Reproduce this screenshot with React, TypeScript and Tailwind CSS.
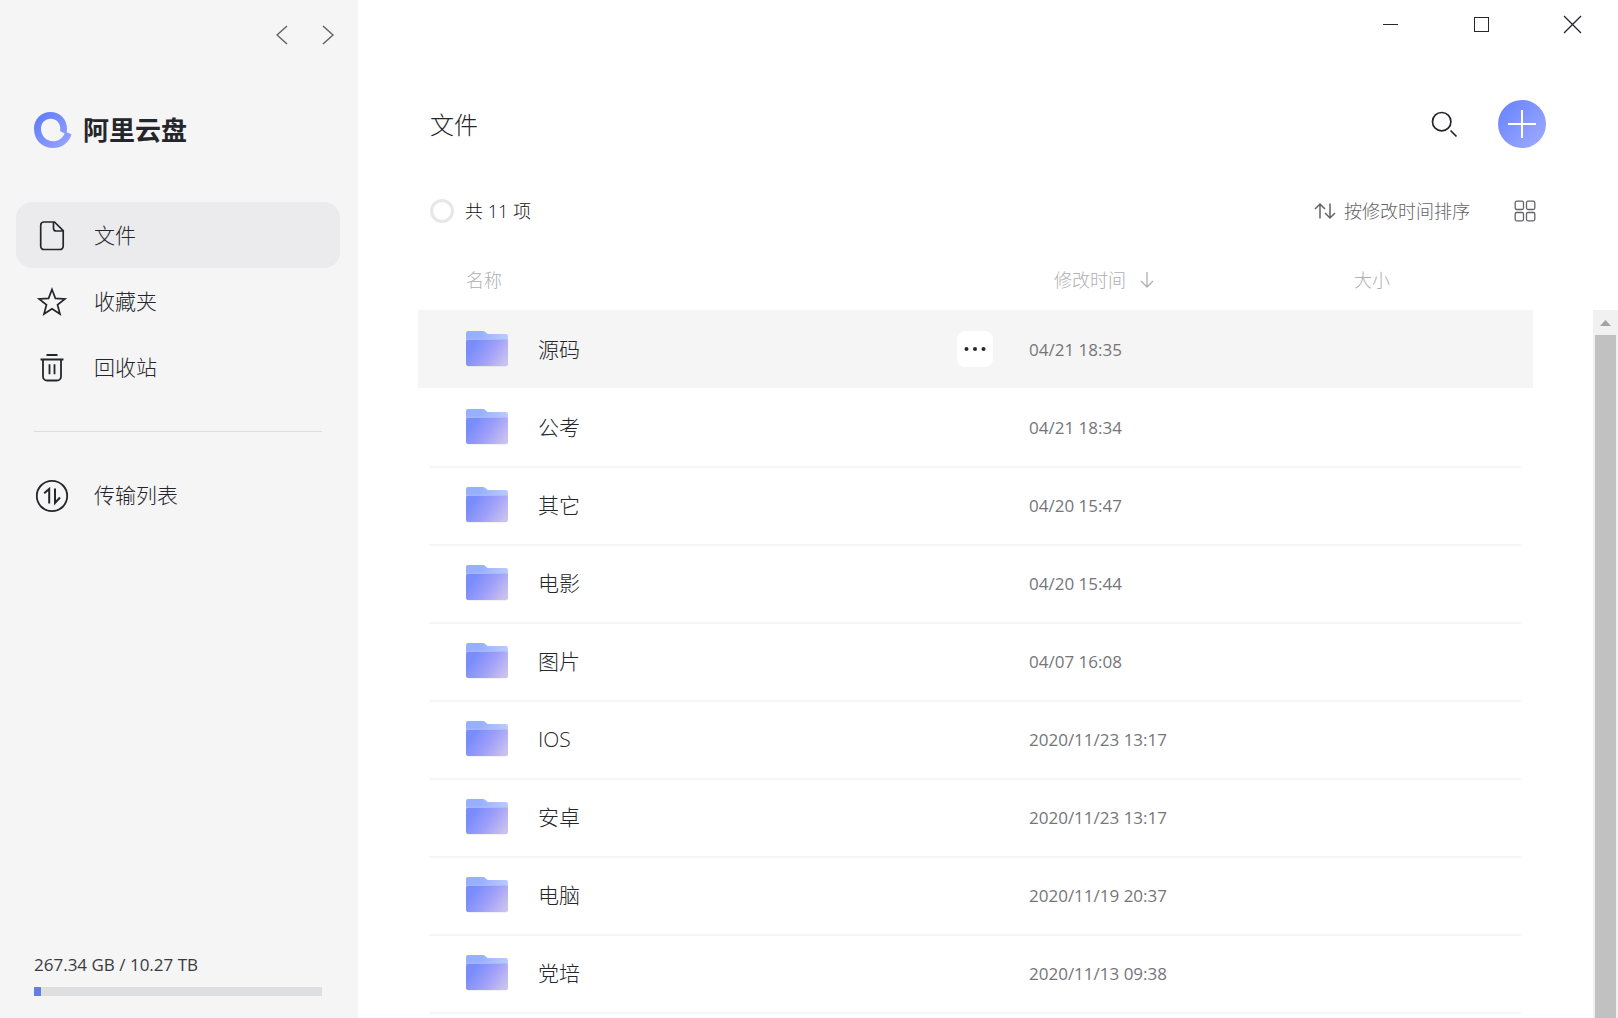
import type { ReactNode } from "react";

type FileRow = {
  name: string;
  modified: string;
};

const files: FileRow[] = [
  { name: "源码", modified: "04/21 18:35" },
  { name: "公考", modified: "04/21 18:34" },
  { name: "其它", modified: "04/20 15:47" },
  { name: "电影", modified: "04/20 15:44" },
  { name: "图片", modified: "04/07 16:08" },
  { name: "IOS", modified: "2020/11/23 13:17" },
  { name: "安卓", modified: "2020/11/23 13:17" },
  { name: "电脑", modified: "2020/11/19 20:37" },
  { name: "党培", modified: "2020/11/13 09:38" },
];

const usedGb = 267.34;
const totalTb = 10.27;
const activeRow = 0;

function LogoMark() {
  return (
    <svg width="38" height="36" viewBox="0 0 38 36" aria-hidden="true">
      <defs>
        <linearGradient id="logo" x1="0" y1="0" x2="1" y2="1">
          <stop offset="0" stopColor="#5b78fb" />
          <stop offset="1" stopColor="#9aa8ff" />
        </linearGradient>
      </defs>
      <path
        fill="url(#logo)"
        d="M16.5 0C26 0 33 7.300 33 16.500c0 1.200 0 2.500-.3 3.700l4.800 2.100C35.500 30 28.500 36 19 36 8 36 0 28 0 16.500 0 7.300 7.300 0 16.500 0Zm.3 6.800C11 6.800 7 11 7 16.800 7 24 12.500 29.200 19 29.200c5 0 9.500-2.700 11.700-7.800L26 19c.2-1 .3-1.600.3-2.500 0-5.500-4.200-9.700-9.500-9.700Z"
      />
    </svg>
  );
}

function FileIcon() {
  return (
    <svg width="36" height="36" viewBox="0 0 36 36" fill="none" stroke="currentColor" strokeWidth="1.7" aria-hidden="true">
      <path d="M10 4h10.500L29.200 12.700V28.200a3.300 3.300 0 0 1-3.300 3.300H10a3.300 3.300 0 0 1-3.300-3.300V7.300A3.300 3.300 0 0 1 10 4Z" />
      <path d="M19.500 4v6.200a2.800 2.800 0 0 0 2.800 2.800h6.900" />
    </svg>
  );
}

function StarIcon() {
  return (
    <svg width="36" height="36" viewBox="0 0 36 36" fill="none" stroke="currentColor" strokeWidth="1.7" aria-hidden="true">
      <path d="m18 5.500 3.400 8.900 9.500.5-7.400 5.900 2.500 9.200-8-5.200-8 5.200 2.500-9.200-7.400-5.900 9.500-.5Z" />
    </svg>
  );
}

function TrashIcon() {
  return (
    <svg width="36" height="36" viewBox="0 0 36 36" fill="none" stroke="currentColor" strokeWidth="1.800" aria-hidden="true">
      <path d="M12.500 5h11M6.500 9.500h23M9 9.500V26.500a4 4 0 0 0 4 4h10a4 4 0 0 0 4-4V9.500M15.500 14.200v10M20.500 14.200v10" />
    </svg>
  );
}

function TransferIcon() {
  return (
    <svg width="36" height="36" viewBox="0 0 36 36" fill="none" stroke="currentColor" strokeWidth="1.800" aria-hidden="true">
      <circle cx="18" cy="18" r="15.200" />
      <path strokeWidth="2" d="M10.200 15.200 15.200 11v14.500M21 10.500V25l5-5.500" />
    </svg>
  );
}

function FolderIcon() {
  return (
    <svg width="42" height="36" viewBox="0 0 42 36" className="shrink-0" aria-hidden="true">
      <defs>
        <linearGradient id="folder-back" x1="0" y1="0" x2="1" y2="0">
          <stop offset="0.3" stopColor="#96affe" />
          <stop offset="1" stopColor="#bccbff" />
        </linearGradient>
        <linearGradient id="folder-front" gradientUnits="userSpaceOnUse" x1="7" y1="14" x2="37" y2="35">
          <stop offset="0" stopColor="#788cfc" />
          <stop offset="0.5" stopColor="#9f9ff8" />
          <stop offset="1" stopColor="#c9c1ef" />
        </linearGradient>
      </defs>
      <rect x="1" y="30" width="40" height="6" rx="2" fill="#000" opacity="0.05" />
      <path fill="url(#folder-back)" d="M2 0h14.500c1.200 0 2 .3 2.800 1L21 2.400c.6.500 1 .6 1.800.6H40a2 2 0 0 1 2 2v12H0V2a2 2 0 0 1 2-2Z" />
      <rect x="0" y="7.700" width="42" height="6" rx="1.500" fill="#b2c0ff" />
      <rect x="0" y="8.800" width="42" height="26.200" rx="2" fill="url(#folder-front)" />
    </svg>
  );
}

function NavItem({ icon, label, active = false }: { icon: ReactNode; label: string; active?: boolean }) {
  return (
    <a
      href="#"
      aria-current={active ? "page" : undefined}
      className={`flex h-[66px] items-center gap-6 rounded-2xl pt-0.5 pl-[18px] text-[21px] font-light ${
        active ? "bg-[#ebebed]" : ""
      }`}
    >
      {icon}
      {label}
    </a>
  );
}

function Sidebar() {
  return (
    <aside className="flex w-[358px] shrink-0 flex-col bg-[#f5f5f5]">
      <div className="flex h-[69px] items-center justify-end gap-3 pr-[13px] text-[#636366]">
        <button type="button" aria-label="后退" className="flex size-[34px] items-center justify-center">
          <svg width="12" height="20" viewBox="0 0 12 20" fill="none" stroke="currentColor" strokeWidth="1.500">
            <path d="M11 1 1 10 11 19" />
          </svg>
        </button>
        <button type="button" aria-label="前进" className="flex size-[34px] items-center justify-center">
          <svg width="12" height="20" viewBox="0 0 12 20" fill="none" stroke="currentColor" strokeWidth="1.500">
            <path d="M1 1l10 9L1 19" />
          </svg>
        </button>
      </div>

      <div className="mt-[41px] flex h-10 items-center gap-[11px] pl-[34px]">
        <LogoMark />
        <span className="text-[26px] leading-9 font-bold">阿里云盘</span>
      </div>

      <nav className="mt-[52px] pr-[18px] pl-4">
        <NavItem icon={<FileIcon />} label="文件" active />
        <NavItem icon={<StarIcon />} label="收藏夹" />
        <NavItem icon={<TrashIcon />} label="回收站" />
        <hr className="mx-[18px] mt-[31px] mb-[30px] border-[#dcdcde]" />
        <NavItem icon={<TransferIcon />} label="传输列表" />
      </nav>

      <div className="mt-auto pr-9 pb-[22px] pl-[34px]">
        <p className="text-[17px] leading-6 font-normal text-[#3a3a3f]">
          {usedGb} GB / {totalTb} TB
        </p>
        <div
          role="progressbar"
          aria-label="容量"
          aria-valuenow={usedGb}
          aria-valuemax={totalTb * 1024}
          className="mt-2.5 h-[9px] bg-[#dedfe1]"
        >
          <div className="h-full bg-[#637dea]" style={{ width: `${(usedGb / (totalTb * 1024)) * 100}%` }} />
        </div>
      </div>
    </aside>
  );
}

function WindowControls() {
  return (
    <div className="flex h-12 justify-end">
      <button type="button" aria-label="最小化" className="flex w-[91px] items-center justify-center">
        <svg width="19" height="19" viewBox="0 0 19 19" stroke="currentColor" shapeRendering="crispEdges">
          <path d="M2 9.500h15" />
        </svg>
      </button>
      <button type="button" aria-label="最大化" className="flex w-[91px] items-center justify-center">
        <svg width="19" height="19" viewBox="0 0 19 19" fill="none" stroke="currentColor" shapeRendering="crispEdges">
          <rect x="2.500" y="2.500" width="14" height="14" />
        </svg>
      </button>
      <button type="button" aria-label="关闭" className="flex w-[91px] items-center justify-center">
        <svg width="19" height="19" viewBox="0 0 19 19" stroke="currentColor" strokeWidth="1.300">
          <path d="m1 1 17 17M18 1 1 18" />
        </svg>
      </button>
    </div>
  );
}

function FileTable() {
  return (
    <table className="w-full table-fixed border-collapse text-left">
      <thead className="text-[18px] text-[#afafb2]">
        <tr className="h-15">
          <th className="pl-12 font-light">名称</th>
          <th className="w-[300px] pl-[25px] font-light">
            <button type="button" className="flex items-center gap-3.5">
              修改时间
              <svg width="14" height="18" viewBox="0 0 14 18" fill="none" stroke="currentColor" strokeWidth="1.300" aria-hidden="true">
                <path d="M7 1v15M1 10l6 6 6-6" />
              </svg>
            </button>
          </th>
          <th className="w-[204px] pl-[25px] font-light">大小</th>
        </tr>
      </thead>
      <tbody>
        {files.map((file, index) => {
          const line = index > activeRow + 1 ? "border-[#f5f5f5]" : "border-transparent";
          return (
            <tr key={file.name} className={index === activeRow ? "bg-[#f5f5f5]" : ""}>
              <td className="p-0 pl-3">
                <div className={`flex h-[78px] items-center border-t-2 pr-9 pb-0.5 pl-9 ${line}`}>
                  <FolderIcon />
                  <a href="#" className="ml-[30px] flex-1 pt-0.5 text-[21px] font-light">
                    {file.name}
                  </a>
                  {index === activeRow && (
                    <button type="button" aria-label="更多" className="flex size-9 items-center justify-center rounded-lg bg-white">
                      <svg width="22" height="4" viewBox="0 0 22 4" fill="currentColor">
                        <circle cx="2.500" cy="2" r="2" />
                        <circle cx="11" cy="2" r="2" />
                        <circle cx="19.500" cy="2" r="2" />
                      </svg>
                    </button>
                  )}
                </div>
              </td>
              <td className="p-0">
                <div className={`flex h-[78px] items-center border-t-2 text-[17px] font-normal text-[#75757a] ${line}`}>
                  {file.modified}
                </div>
              </td>
              <td className="p-0 pr-3">
                <div className={`h-[78px] border-t-2 ${line}`} />
              </td>
            </tr>
          );
        })}
      </tbody>
    </table>
  );
}

export default function App() {
  return (
    <div className="flex h-screen overflow-hidden bg-white font-['Open_Sans','Noto_Sans_CJK_SC',sans-serif] text-[#25262b]">
      <Sidebar />

      <main className="flex min-w-0 flex-1 flex-col">
        <WindowControls />

        <header className="mt-[52px] flex h-12 items-center justify-between px-[72px]">
          <h1 className="pt-0.5 text-[24px] font-light">文件</h1>
          <div className="flex items-center gap-9">
            <button type="button" aria-label="搜索" className="flex size-9 items-center justify-center">
              <svg width="28" height="28" viewBox="0 0 28 28" fill="none" stroke="currentColor" strokeWidth="1.700">
                <circle cx="11.700" cy="11.700" r="9.200" />
                <path d="m20.500 20.500 6 6" />
              </svg>
            </button>
            <button
              type="button"
              aria-label="新建"
              className="flex size-12 items-center justify-center rounded-full bg-linear-to-br from-[#6680ff] to-[#a1acff] text-white"
            >
              <svg width="28" height="28" viewBox="0 0 28 28" stroke="currentColor" strokeWidth="2">
                <path d="M14 0v28M0 14h28" />
              </svg>
            </button>
          </div>
        </header>

        <div className="mt-[39px] flex h-12 items-center justify-between pr-[82px] pl-[72px] text-[18px] font-light">
          <label className="flex items-center gap-[11px]">
            <input type="checkbox" className="size-6 appearance-none rounded-full border-3 border-[#e7e7e9]" />
            <span className="text-[#0f1014]">共 11 项</span>
          </label>
          <div className="flex items-center gap-11 text-[#636366]">
            <button type="button" className="flex items-center gap-2">
              <svg width="22" height="18" viewBox="0 0 22 18" fill="none" stroke="currentColor" strokeWidth="1.500" aria-hidden="true">
                <path d="M6 16.500V2M1 7l5-5 5 5M16 1.500V16M11 11l5 5 5-5" />
              </svg>
              按修改时间排序
            </button>
            <button type="button" aria-label="网格视图">
              <svg width="22" height="22" viewBox="0 0 22 22" fill="none" stroke="currentColor" strokeWidth="1.300">
                <rect x="1.200" y="1.200" width="8.300" height="8.300" rx="1.500" />
                <rect x="12.500" y="1.200" width="8.300" height="8.300" rx="1.500" />
                <rect x="1.200" y="12.500" width="8.300" height="8.300" rx="1.500" />
                <rect x="12.500" y="12.500" width="8.300" height="8.300" rx="1.500" />
              </svg>
            </button>
          </div>
        </div>

        <div className="mt-[15px] flex min-h-0 flex-1">
          <div className="min-w-0 flex-1 overflow-hidden px-[60px]">
            <FileTable />
            <div className="mx-3 h-0.5 bg-[#f5f5f5]" />
          </div>
          <div className="mt-15 flex w-[25px] shrink-0 flex-col bg-[#f1f1f1] px-0.5">
            <div className="flex h-[25px] items-center justify-center">
              <svg width="11" height="6" viewBox="0 0 11 6" fill="#a3a3a3" aria-hidden="true">
                <path d="M5.500 0 11 6H0Z" />
              </svg>
            </div>
            <div className="flex-1 bg-[#c1c1c1]" />
          </div>
        </div>
      </main>
    </div>
  );
}
